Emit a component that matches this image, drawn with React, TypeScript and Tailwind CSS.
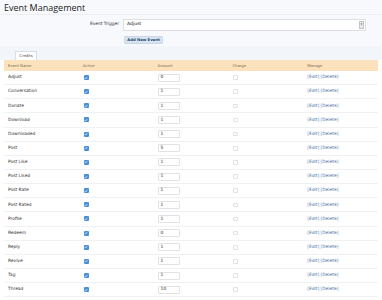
import React from "react";

const events = [
  { name: "Adjust", amount: "0" },
  { name: "Conversation", amount: "1" },
  { name: "Donate", amount: "1" },
  { name: "Download", amount: "1" },
  { name: "Downloaded", amount: "1" },
  { name: "Post", amount: "5" },
  { name: "Post Like", amount: "1" },
  { name: "Post Liked", amount: "1" },
  { name: "Post Rate", amount: "1" },
  { name: "Post Rated", amount: "1" },
  { name: "Profile", amount: "1" },
  { name: "Redeem", amount: "0" },
  { name: "Reply", amount: "1" },
  { name: "Revive", amount: "1" },
  { name: "Tag", amount: "1" },
  { name: "Thread", amount: "10" },
];

const Checked = () => (
  <div className="w-[5px] h-[5px] rounded-[1px] bg-[#4a90d9] flex items-center justify-center">
    <svg width="4" height="4" viewBox="0 0 4 4">
      <path d="M0.7 2 L1.6 3 L3.3 0.9" stroke="white" strokeWidth="0.6" fill="none" />
    </svg>
  </div>
);

const App = () => {
  return (
    <div
      className="w-[382px] h-[300px] overflow-hidden bg-white text-[#333]"
      style={{ fontFamily: '"DejaVu Sans", Verdana, sans-serif' }}
    >
      <div className="bg-[#f8f9fc]">
        <div className="h-[15px] px-[4px] pt-[2px] border-b border-[#eceef2]">
          <h1 className="text-[9px] leading-[11px] text-[#222]" style={{ fontFamily: '"Open Sans", sans-serif' }}>
            Event Management
          </h1>
        </div>
        <div className="flex items-center h-[17px] pt-[2px]">
          <div className="w-[119px] text-right text-[4.4px] text-[#333]">Event Trigger</div>
          <div className="ml-[4px] w-[243px] h-[12px] bg-white border border-[#dcdee2] flex items-center justify-between pl-[3px] pr-[1px]">
            <span className="text-[4.6px] text-[#222]">Adjust</span>
            <div className="w-[5px] h-[8px] bg-[#e8e8e8] border border-[#c4c4c4] flex items-center justify-center">
              <span className="text-[3px] leading-none text-[#444]">▾</span>
            </div>
          </div>
        </div>
        <div className="flex pl-[124px] pt-[4px] h-[14px]">
          <div className="w-[39px] h-[8px] rounded-[1px] bg-[#d7e3f0] border border-[#cad7e8] flex items-center justify-center text-[3.8px] font-bold text-[#2e4866]">
            Add New Event
          </div>
        </div>
        <div className="h-[14px] flex items-end pl-[15px] bg-[#f2f6fb]">
          <div className="w-[22px] h-[9px] bg-white border border-b-0 border-[#d6dee8] flex items-center justify-center text-[3.8px] text-[#444]">
            Credits
          </div>
        </div>
      </div>
      <div className="px-[4px]">
        <div className="grid grid-cols-5 h-[11px] items-center bg-[#fbe2bd] text-[3.8px] text-[#7a6650]">
          <div className="pl-[4px]">Event Name</div>
          <div className="pl-[4px]">Active</div>
          <div className="pl-[4px]">Amount</div>
          <div className="pl-[4px]">Charge</div>
          <div className="pl-[4px]">Manage</div>
        </div>
        {events.map((ev) => (
          <div
            key={ev.name}
            className="grid grid-cols-5 h-[14.15px] items-center border-b border-[#f0f1f3] text-[4.4px]"
          >
            <div className="pl-[4px] text-[#333]">{ev.name}</div>
            <div className="pl-[5px]">
              <Checked />
            </div>
            <div className="pl-[4px]">
              <div className="w-[22px] h-[8px] bg-white border border-[#e0e2e6] rounded-[1px] flex items-center pl-[2px] text-[4.4px] text-[#222]">
                {ev.amount}
              </div>
            </div>
            <div className="pl-[5px]">
              <div className="w-[4.5px] h-[4.5px] border border-[#e2e2e2] rounded-[1px] bg-white" />
            </div>
            <div className="pl-[4px] text-[#4a6fa5]">[Edit] [Delete]</div>
          </div>
        ))}
      </div>
    </div>
  );
};

export default App;
